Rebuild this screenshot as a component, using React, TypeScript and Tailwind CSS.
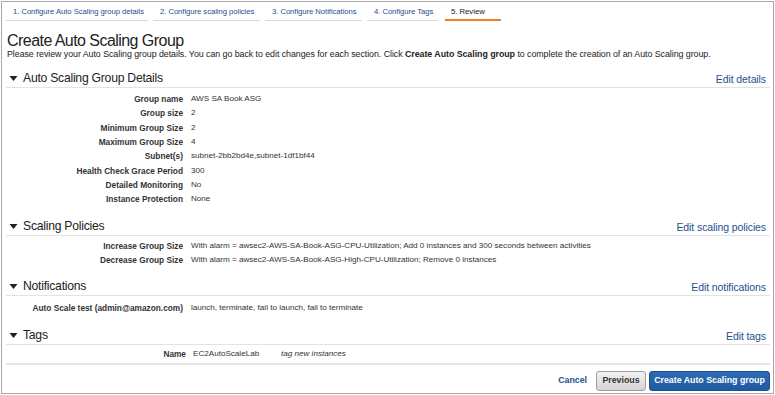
import React from "react";

const font = { fontFamily: '"Liberation Sans", Arial, sans-serif' };

function Tri() {
  return (
    <svg width="9" height="7" viewBox="0 0 9 7" className="mr-[5px] shrink-0">
      <path d="M0.5 1 L8.5 1 L4.5 6 Z" fill="#222" />
    </svg>
  );
}

function SectionHeader({ title, edit }: { title: string; edit: string }) {
  return (
    <div className="flex items-end justify-between border-b border-[#e3e3e3] pb-[1px] pl-[3px] pr-[4px]">
      <div className="flex items-center text-[12.2px] leading-[15px] text-[#222] tracking-[-0.25px]">
        <Tri />
        <span>{title}</span>
      </div>
      <a className="text-[10.5px] leading-[14px] text-[#1f4f8f] tracking-[-0.1px]">{edit}</a>
    </div>
  );
}

function Row({ label, children }: { label: string; children: React.ReactNode }) {
  return (
    <div className="flex h-[14.3px] items-center leading-[10px]">
      <div className="w-[177px] shrink-0 text-right text-[8.3px] font-bold text-[#333]">{label}</div>
      <div className="pl-[8px] text-[8.1px] text-[#333]">{children}</div>
    </div>
  );
}

export default function App() {
  const tabs = [
    { t: "1. Configure Auto Scaling group details", w: "w-[142px]" },
    { t: "2. Configure scaling policies", w: "w-[107px]" },
    { t: "3. Configure Notifications", w: "w-[97px]" },
    { t: "4. Configure Tags", w: "w-[71px]" },
  ];
  return (
    <div style={font} className="w-[775px] h-[395px] bg-white p-[1px]">
      <div className="h-[393px] w-[773px] border border-[#a8a8a8] pl-[4px] pr-[3px] flex flex-col">
        <div className="flex gap-[5px] pt-[3px]">
          {tabs.map((x) => (
            <div
              key={x.t}
              className={`${x.w} border-b border-[#d8d8d8] pt-[2px] pb-[3px] pl-[7px] text-[7.7px] leading-[10px] text-[#1f4f8f] tracking-[-0.05px]`}
            >
              {x.t}
            </div>
          ))}
          <div className="ml-[2px] w-[56px] border-b-2 border-[#f07d1f] pt-[2px] pb-[2px] pl-[6px] text-[7.7px] leading-[10px] text-[#222]">
            5. Review
          </div>
        </div>
        <div className="mt-[11px] pl-[1px] text-[16px] leading-[17px] text-[#222] tracking-[-0.55px]">
          Create Auto Scaling Group
        </div>
        <div className="pl-[1px] text-[8.85px] leading-[11px] text-[#222] tracking-[-0.05px]">
          Please review your Auto Scaling group details. You can go back to edit changes for each section. Click{" "}
          <b>Create Auto Scaling group</b> to complete the creation of an Auto Scaling group.
        </div>

        <div className="mt-[11px]">
          <SectionHeader title="Auto Scaling Group Details" edit="Edit details" />
          <div className="pt-[4px]">
            <Row label="Group name">AWS SA Book ASG</Row>
            <Row label="Group size">2</Row>
            <Row label="Minimum Group Size">2</Row>
            <Row label="Maximum Group Size">4</Row>
            <Row label="Subnet(s)">subnet-2bb2bd4e,subnet-1df1bf44</Row>
            <Row label="Health Check Grace Period">300</Row>
            <Row label="Detailed Monitoring">No</Row>
            <Row label="Instance Protection">None</Row>
          </div>
        </div>

        <div className="mt-[13px]">
          <SectionHeader title="Scaling Policies" edit="Edit scaling policies" />
          <div className="pt-[2px]">
            <Row label="Increase Group Size">
              With alarm = awsec2-AWS-SA-Book-ASG-CPU-Utilization; Add 0 instances and 300 seconds between activities
            </Row>
            <Row label="Decrease Group Size">
              With alarm = awsec2-AWS-SA-Book-ASG-High-CPU-Utilization; Remove 0 instances
            </Row>
          </div>
        </div>

        <div className="mt-[12px]">
          <SectionHeader title="Notifications" edit="Edit notifications" />
          <div className="pt-[5px]">
            <Row label="Auto Scale test (admin@amazon.com)">launch, terminate, fail to launch, fail to terminate</Row>
          </div>
        </div>

        <div className="mt-[13px]">
          <SectionHeader title="Tags" edit="Edit tags" />
          <div className="pt-[2px] pb-[1px] border-b-2 border-[#e6e6e6]">
            <div className="flex h-[14.3px] items-center leading-[10px]">
              <div className="w-[180px] shrink-0 text-right text-[8.3px] font-bold text-[#333]">Name</div>
              <div className="pl-[7px] w-[95px] text-[8.1px] text-[#333]">EC2AutoScaleLab</div>
              <div className="italic text-[8.1px] text-[#333]">tag new instances</div>
            </div>
          </div>
        </div>

        <div className="flex items-center justify-end gap-[3px] pt-[6px]">
          <a className="mr-[6px] text-[8.8px] font-bold text-[#1f4f8f]">Cancel</a>
          <button className="h-[20px] w-[50px] rounded-[3px] border border-[#a0a0a0] bg-gradient-to-b from-[#f2f2f2] to-[#d4d4d4] text-[8.8px] font-bold text-[#333]">
            Previous
          </button>
          <button className="h-[20px] w-[121px] rounded-[3px] border border-[#1b4f8f] bg-gradient-to-b from-[#2f6bb3] to-[#1f5aa0] text-[8.8px] font-bold text-white">
            Create Auto Scaling group
          </button>
        </div>
      </div>
    </div>
  );
}
